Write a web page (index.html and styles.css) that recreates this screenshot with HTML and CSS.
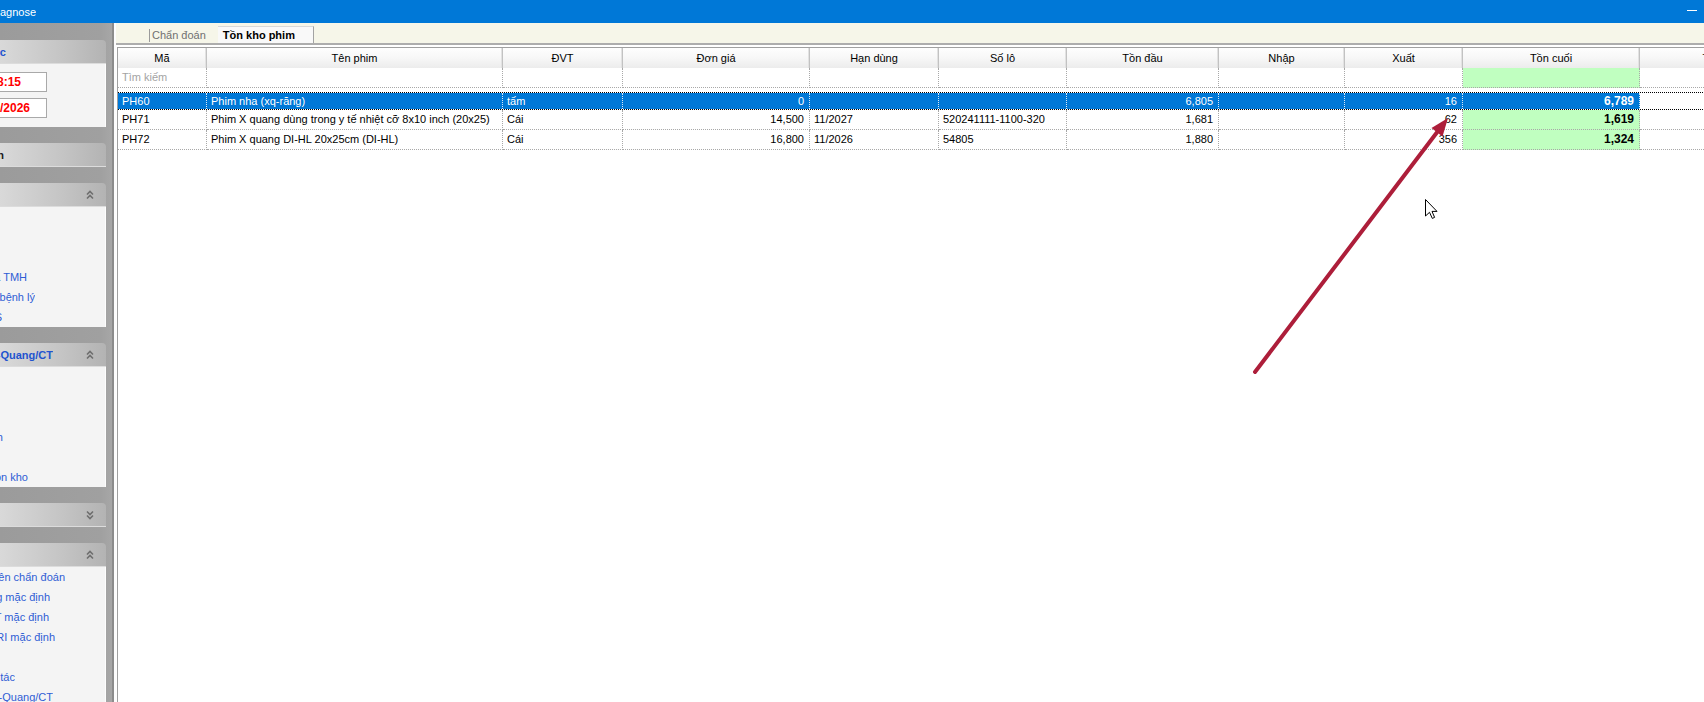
FILE: index.html
```html
<!DOCTYPE html>
<html lang="vi">
<head>
<meta charset="utf-8">
<title>Diagnose</title>
<link rel="stylesheet" href="styles.css">
</head>
<body>
<div class="app">
  <header class="titlebar">
    <div class="title clip end-36"><span>RIS - Diagnose</span></div>
    <div class="win-min"></div>
  </header>
  <div class="workspace">
    <aside class="sidebar">
      <section class="sb-sec">
        <div class="sb-head"><div class="clip end-6"><span>Thông tin làm việc</span></div></div>
        <div class="sb-body sb-inputs">
          <div class="sb-input"><div class="clip end-21"><span>08:15</span></div></div>
          <div class="sb-input"><div class="clip end-30"><span>13/01/2026</span></div></div>
        </div>
      </section>
      <section class="sb-sec">
        <div class="sb-head dark"><div class="clip end-4"><span>Danh sách bệnh nhân</span></div></div>
      </section>
      <section class="sb-sec">
        <div class="sb-head"><div class="clip end-0"><span>Danh mục</span></div>
          <svg class="chev" width="8" height="10" viewBox="0 0 8 10"><path d="M1 4.5 L4 1.5 L7 4.5 M1 8.5 L4 5.5 L7 8.5" fill="none" stroke="#6e6e6e" stroke-width="1.6"/></svg>
        </div>
        <div class="sb-body">
          <div class="sb-item clip end-0"><span>Mẫu kết quả</span></div>
          <div class="sb-item clip end-0"><span>Mẫu in</span></div>
          <div class="sb-item clip end-0"><span>Chẩn đoán</span></div>
          <div class="sb-item clip end-27"><span>Mẫu kết quả TMH</span></div>
          <div class="sb-item clip end-35"><span>Danh sách bệnh lý</span></div>
          <div class="sb-item clip end-2"><span>Kết nối PACS</span></div>
        </div>
      </section>
      <section class="sb-sec">
        <div class="sb-head"><div class="clip end-53"><span>Chẩn đoán X-Quang/CT</span></div>
          <svg class="chev" width="8" height="10" viewBox="0 0 8 10"><path d="M1 4.5 L4 1.5 L7 4.5 M1 8.5 L4 5.5 L7 8.5" fill="none" stroke="#6e6e6e" stroke-width="1.6"/></svg>
        </div>
        <div class="sb-body">
          <div class="sb-item clip end-0"><span>Danh sách phim</span></div>
          <div class="sb-item clip end-0"><span>Thống kê</span></div>
          <div class="sb-item clip end-0"><span>Báo cáo</span></div>
          <div class="sb-item clip end-3"><span>Xuất phim theo thiết bị hình</span></div>
          <div class="sb-item clip end-0"><span>Nhập phim</span></div>
          <div class="sb-item clip end-28"><span>Báo cáo tồn kho</span></div>
        </div>
      </section>
      <section class="sb-sec">
        <div class="sb-head"><div class="clip end-0"><span>Tiện ích</span></div>
          <svg class="chev" width="8" height="10" viewBox="0 0 8 10"><path d="M1 1.5 L4 4.5 L7 1.5 M1 5.5 L4 8.5 L7 5.5" fill="none" stroke="#6e6e6e" stroke-width="1.6"/></svg>
        </div>
      </section>
      <section class="sb-sec">
        <div class="sb-head"><div class="clip end-0"><span>Hệ thống</span></div>
          <svg class="chev" width="8" height="10" viewBox="0 0 8 10"><path d="M1 4.5 L4 1.5 L7 4.5 M1 8.5 L4 5.5 L7 8.5" fill="none" stroke="#6e6e6e" stroke-width="1.6"/></svg>
        </div>
        <div class="sb-body">
          <div class="sb-item clip end-65"><span>Mẫu lời dặn theo tên chẩn đoán</span></div>
          <div class="sb-item clip end-50"><span>Mẫu kết quả siêu âm tổng mặc định</span></div>
          <div class="sb-item clip end-49"><span>Mẫu kết quả CT mặc định</span></div>
          <div class="sb-item clip end-55"><span>Mẫu kết quả MRI mặc định</span></div>
          <div class="sb-item clip end-0"><span>Người dùng</span></div>
          <div class="sb-item clip end-15"><span>Nhật ký thao tác</span></div>
          <div class="sb-item clip end-53"><span>Danh sách phim X-Quang/CT</span></div>
        </div>
      </section>
    </aside>
    <div class="splitter"></div>
    <main class="content">
      <div class="tabstrip">
        <div class="tab-inactive">Chẩn đoán</div>
        <div class="tab-active">Tồn kho phim</div>
      </div>
      <div class="gridwrap">
        <div class="grid">
          <div class="grow ghead">
            <div class="c">Mã</div>
            <div class="c">Tên phim</div>
            <div class="c">ĐVT</div>
            <div class="c">Đơn giá</div>
            <div class="c">Hạn dùng</div>
            <div class="c">Số lô</div>
            <div class="c">Tồn đầu</div>
            <div class="c">Nhập</div>
            <div class="c">Xuất</div>
            <div class="c">Tồn cuối</div>
            <div class="c">Thành tiền</div>
          </div>
          <div class="grow gsearch">
            <div class="c hint">Tìm kiếm</div>
            <div class="c"></div>
            <div class="c"></div>
            <div class="c"></div>
            <div class="c"></div>
            <div class="c"></div>
            <div class="c"></div>
            <div class="c"></div>
            <div class="c"></div>
            <div class="c green"></div>
            <div class="c"></div>
          </div>
          <div class="ggap"></div>
          <div class="grow gsel">
            <div class="c">PH60</div>
            <div class="c">Phim nha (xq-răng)</div>
            <div class="c">tấm</div>
            <div class="c r">0</div>
            <div class="c"></div>
            <div class="c"></div>
            <div class="c r">6,805</div>
            <div class="c"></div>
            <div class="c r">16</div>
            <div class="c r b">6,789</div>
            <div class="c blank"></div>
          </div>
          <div class="grow gdata">
            <div class="c">PH71</div>
            <div class="c">Phim X quang dùng trong y tế nhiệt cỡ 8x10 inch (20x25)</div>
            <div class="c">Cái</div>
            <div class="c r">14,500</div>
            <div class="c">11/2027</div>
            <div class="c">520241111-1100-320</div>
            <div class="c r">1,681</div>
            <div class="c"></div>
            <div class="c r">62</div>
            <div class="c r b green">1,619</div>
            <div class="c"></div>
          </div>
          <div class="grow gdata">
            <div class="c">PH72</div>
            <div class="c">Phim X quang DI-HL 20x25cm (DI-HL)</div>
            <div class="c">Cái</div>
            <div class="c r">16,800</div>
            <div class="c">11/2026</div>
            <div class="c">54805</div>
            <div class="c r">1,880</div>
            <div class="c"></div>
            <div class="c r">356</div>
            <div class="c r b green">1,324</div>
            <div class="c"></div>
          </div>
        </div>
      </div>
    </main>
  </div>
  <svg class="overlay" width="1704" height="702" viewBox="0 0 1704 702">
    <line x1="1255" y1="372" x2="1438" y2="131" stroke="#ad1e3a" stroke-width="4" stroke-linecap="round"/>
    <polygon points="1448,118 1442.5,136.5 1431.5,128" fill="#ad1e3a"/>
    <polygon points="1425.5,199.5 1425.5,216 1429.5,212.3 1432.3,218.4 1434.6,217.4 1432,211.4 1437,211.4" fill="#fff" stroke="#000" stroke-width="1" stroke-linejoin="round"/>
  </svg>
</div>
</body>
</html>
```
FILE: styles.css
```css
* { box-sizing: border-box; }
html, body { margin: 0; padding: 0; }
body {
  width: 1704px;
  height: 702px;
  overflow: hidden;
  background: #fff;
  color: #000;
  font-family: "Liberation Sans", Arial, sans-serif;
  font-size: 11px;
}
.app {
  position: relative;
  width: 1704px;
  height: 702px;
  display: flex;
  flex-direction: column;
  overflow: hidden;
}

/* clipped text: only the end of the text is visible (window scrolled left) */
.clip {
  direction: rtl;
  overflow: hidden;
  white-space: nowrap;
  flex: none;
}
.clip > span { direction: ltr; unicode-bidi: isolate; }
.end-0 { width: 0; }
.end-2 { width: 2px; }
.end-3 { width: 3px; }
.end-4 { width: 4px; }
.end-6 { width: 6px; }
.end-15 { width: 15px; }
.end-21 { width: 21px; }
.end-27 { width: 27px; }
.end-28 { width: 28px; }
.end-30 { width: 30px; }
.end-35 { width: 35px; }
.end-36 { width: 36px; }
.end-49 { width: 49px; }
.end-50 { width: 50px; }
.end-53 { width: 53px; }
.end-55 { width: 55px; }
.end-65 { width: 65px; }

/* title bar */
.titlebar {
  height: 23px;
  flex: none;
  background: #0078d7;
  color: #fff;
  display: flex;
  align-items: center;
}
.title { font-size: 11px; }
.win-min {
  margin-left: auto;
  margin-right: 7px;
  margin-bottom: 3px;
  width: 10px;
  height: 1px;
  background: #fff;
}

.workspace {
  flex: 1;
  display: flex;
  min-height: 0;
}

/* sidebar */
.sidebar {
  width: 112px;
  flex: none;
  padding-top: 17px;
  overflow: hidden;
  background: linear-gradient(to right, #9b9b9b 0%, #a0a0a0 90%, #a7a7a7 100%);
}
.sb-sec {
  width: 106px;
  margin-bottom: 16px;
}
.sb-head {
  height: 24px;
  display: flex;
  align-items: center;
  padding-right: 12px;
  border-radius: 0 4px 0 0;
  background: linear-gradient(to right, #d9d9d9 0%, #c4c4c4 60%, #b3b3b3 100%);
  border-bottom: 1px solid #dcdcdc;
  color: #2253cf;
  font-weight: bold;
}
.sb-head.dark { color: #1b1b1b; }
.chev { margin-left: auto; flex: none; }
.sb-body {
  background: #f4f4f4;
  border-right: 1px solid #fdfdfd;
}
.sb-item {
  height: 20px;
  line-height: 20px;
  color: #2f5dd5;
}
.sb-inputs {
  height: 63px;
  padding-top: 8px;
}
.sb-input {
  width: 47px;
  height: 20px;
  margin-bottom: 6px;
  display: flex;
  align-items: center;
  background: #fff;
  border: 1px solid #a9a9a9;
  border-left: none;
  color: #ff0000;
  font-size: 12px;
  font-weight: bold;
}

.splitter {
  width: 4px;
  flex: none;
  background: linear-gradient(to right, #8c8c8c 0, #8c8c8c 2px, #fdfdfd 2px, #fdfdfd 4px);
}

/* content */
.content {
  flex: 1;
  min-width: 0;
  display: flex;
  flex-direction: column;
  overflow: hidden;
}
.tabstrip {
  height: 22px;
  flex: none;
  display: flex;
  align-items: flex-end;
  padding-left: 33px;
  background: #f6f6e9;
  border-bottom: 2px solid #adadad;
}
.tab-inactive {
  align-self: center;
  margin-top: 4px;
  border-left: 1px solid #9b9b9b;
  padding-left: 2px;
  line-height: 13px;
  color: #707070;
}
.tab-active {
  margin-left: 12px;
  width: 96px;
  height: 17px;
  padding-left: 5px;
  line-height: 16px;
  background: #f9f9f9;
  border-top: 1px solid #d8d8d8;
  border-right: 1px solid #a3a3a3;
  font-weight: bold;
}

.gridwrap {
  flex: 1;
  min-height: 0;
  padding: 2px 0 0 1px;
}
.grid {
  height: 100%;
  width: 1702px;
  border-top: 1px solid #a0a0a0;
  border-left: 1px solid #a0a0a0;
}
.grow {
  display: grid;
  grid-template-columns: 89px 296px 120px 187px 129px 128px 152px 126px 118px 177px 178px;
}
.c {
  overflow: hidden;
  white-space: nowrap;
  padding: 0 5px 0 4px;
  border-right: 1px dotted #a8a8a8;
}
.r { text-align: right; }
.b { font-weight: bold; font-size: 12px; }
.green { background: #c0ffc0; }

.ghead .c {
  height: 20px;
  line-height: 20px;
  padding: 0;
  text-align: center;
  background: linear-gradient(to bottom, #fefefe 0%, #f7f7f7 50%, #ececec 100%);
  border-right: 1px solid #c2c2c2;
  box-shadow: inset -1px 0 0 #e2e2e2;
}
.gsearch .c {
  height: 20px;
  line-height: 19px;
  border-bottom: 1px dotted #a8a8a8;
}
.hint { color: #a3a3a3; }
.ggap { height: 4px; }
.gsel {
  border-top: 1px dotted #000;
  border-bottom: 1px dotted #000;
}
.gsel .c {
  height: 16px;
  line-height: 16px;
  background: #0078d7;
  color: #fff;
  border-right: 1px dotted #d6e8f7;
}
.gsel .c.blank {
  background: #fff;
  border-right: 1px dotted #a8a8a8;
}
.gdata .c {
  height: 20px;
  line-height: 19px;
  border-bottom: 1px dotted #a8a8a8;
}

.overlay {
  position: absolute;
  left: 0;
  top: 0;
  pointer-events: none;
}
```
